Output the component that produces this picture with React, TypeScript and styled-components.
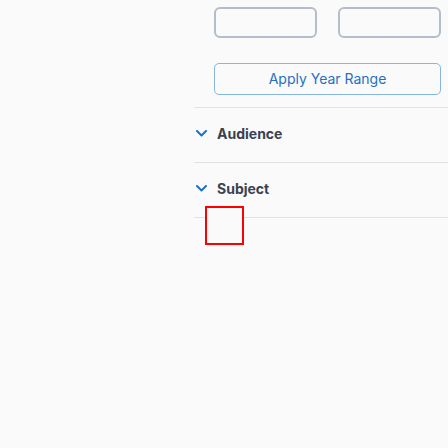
import React from 'react';
import styled, { createGlobalStyle } from 'styled-components';

const GlobalStyle = createGlobalStyle`
  html, body {
    margin: 0;
    padding: 0;
    background: #fafafa;
    font-family: Inter, "Liberation Sans", sans-serif;
  }
`;

const Page = styled.div`
  display: flex;
  width: 448px;
  height: 448px;
  overflow: hidden;
`;

const Main = styled.div`
  width: 194px;
  flex-shrink: 0;
`;

const Sidebar = styled.aside`
  flex: 1;
  display: flex;
  flex-direction: column;
`;

const YearSection = styled.section`
  padding: 7px 7px 12px 20px;
  border-bottom: 1px solid #e2e2e4;
  display: flex;
  flex-direction: column;
  gap: 25px;
`;

const InputRow = styled.div`
  display: flex;
  gap: 21px;
`;

const YearInput = styled.input`
  box-sizing: border-box;
  width: 103px;
  height: 31px;
  border: 2px solid #b4bdc9;
  border-radius: 6px;
  background: #fafafa;
  padding: 0 8px;
  font: inherit;
  outline: none;
`;

const ApplyButton = styled.button`
  box-sizing: border-box;
  width: 227px;
  height: 32px;
  padding: 0 0 1px;
  border: 1px solid #86b7e3;
  border-radius: 5px;
  background: #fafafa;
  color: #2670c2;
  font-family: inherit;
  font-size: 14px;
  cursor: pointer;
`;

const Facet = styled.section`
  position: relative;
  box-sizing: content-box;
  height: 50px;
  padding: 0 0 4px 2px;
  border-bottom: 1px solid #e2e2e4;
  display: flex;
  align-items: center;
  gap: 10px;
  font-size: 14px;
  font-weight: 700;
  color: #3a4250;
`;

const Chevron = styled.svg`
  flex-shrink: 0;
  display: block;
  width: 11px;
  height: 7px;
`;

const FocusBox = styled.div`
  position: absolute;
  left: 11px;
  top: 43px;
  width: 39px;
  height: 39px;
  box-sizing: border-box;
  border: 2px solid #ff0000;
  background: #fafafa;
`;

function FacetHeader({ label, focused }: { label: string; focused?: boolean }) {
  return (
    <Facet>
      <Chevron viewBox="0 0 11 7" width={11} height={7}>
        <path d="M1 1 L5.5 5.5 L10 1" fill="none" stroke="#1d72c6" strokeWidth="2" strokeLinecap="round" strokeLinejoin="round" />
      </Chevron>
      <span>{label}</span>
      {focused && <FocusBox />}
    </Facet>
  );
}

export default function App() {
  return (
    <Page>
      <GlobalStyle />
      <Main />
      <Sidebar>
        <YearSection>
          <InputRow>
            <YearInput />
            <YearInput />
          </InputRow>
          <ApplyButton>Apply Year Range</ApplyButton>
        </YearSection>
        <FacetHeader label="Audience" />
        <FacetHeader label="Subject" focused />
      </Sidebar>
    </Page>
  );
}
